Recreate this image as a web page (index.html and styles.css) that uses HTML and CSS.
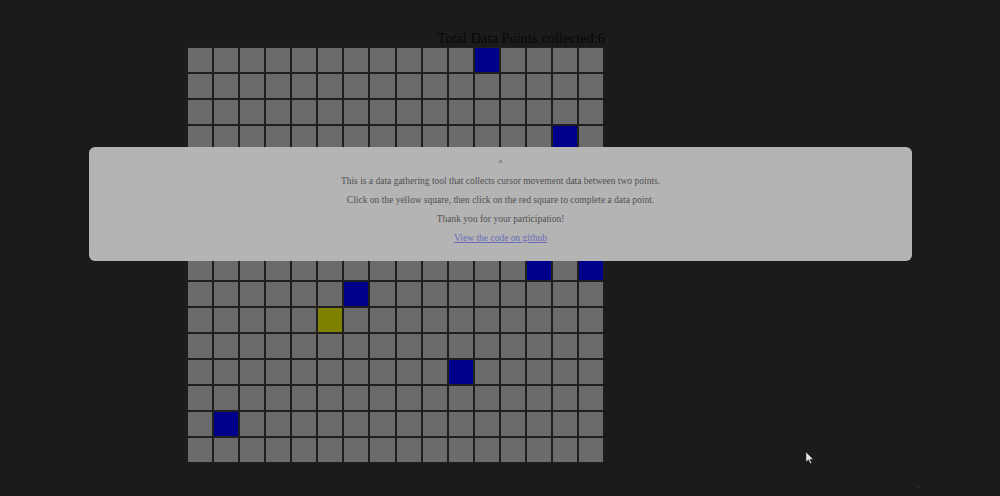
FILE: index.html
```html
<!DOCTYPE html>
<html>
<head>
<meta charset="utf-8">
<link rel="stylesheet" href="styles.css">
</head>
<body>
<div class="page">
  <div class="board">
    <div class="title">Total Data Points collected:6</div>
    <div class="grid" id="grid"></div>
  </div>
</div>
<div class="modal">
  <div class="close">×</div>
  <p>This is a data gathering tool that collects cursor movement data between two points.</p>
  <p>Click on the yellow square, then click on the red square to complete a data point.</p>
  <p>Thank you for your participation!</p>
  <p><a href="#">View the code on github</a></p>
</div>
<svg class="cursor" width="10" height="14" viewBox="0 0 10 14"><path d="M1 1 L1 11 L3.5 8.8 L5.2 12.6 L6.6 12 L5 8.3 L8.2 8.3 Z" fill="#e8e8e8" stroke="#333" stroke-width="0.6"/></svg>
<div class="dot"></div>
<script>
var blue = {"0,11":1,"3,14":1,"8,13":1,"8,15":1,"9,6":1,"12,10":1,"14,1":1};
var g = document.getElementById('grid');
for (var r = 0; r < 16; r++) {
  for (var c = 0; c < 16; c++) {
    var d = document.createElement('div');
    d.className = 'cell';
    if (blue[r + ',' + c]) d.className += ' blue';
    if (r === 10 && c === 5) d.className += ' yellow';
    g.appendChild(d);
  }
}
</script>
</body>
</html>
```
FILE: styles.css
```css
html, body {
  margin: 0;
  padding: 0;
  background: #1b1b1b;
  width: 1000px;
  height: 496px;
  overflow: hidden;
  font-family: "Liberation Serif", "Times New Roman", serif;
}
.page {
  padding-left: 187px;
  padding-top: 30px;
}
.board {
  width: 418px;
}
.title {
  text-align: right;
  font-size: 14.5px;
  line-height: 17px;
  color: #070707;
}
.grid {
  display: grid;
  grid-template-columns: repeat(16, 1fr);
  grid-auto-rows: 26px;
  width: 417px;
}
.cell {
  box-sizing: border-box;
  border: 1px solid #1f1f1f;
  background: #6b6b6b;
}
.cell.blue {
  background: #00008a;
}
.cell.yellow {
  background: #808000;
}
.modal {
  position: absolute;
  left: 89px;
  top: 147px;
  width: 823px;
  height: 114px;
  box-sizing: border-box;
  background: #b4b4b4;
  border-radius: 6px;
  padding-top: 9px;
  display: flex;
  flex-direction: column;
  align-items: center;
  gap: 7px;
  color: #505050;
  font-size: 9.5px;
  line-height: 12px;
}
.modal p {
  margin: 0;
}
.close {
  font-size: 8px;
  color: #444;
}
.modal a {
  color: #6a6ab8;
  text-decoration: underline;
}
.cursor {
  position: absolute;
  left: 805px;
  top: 451px;
}
.dot {
  position: absolute;
  left: 918px;
  top: 487px;
  width: 1px;
  height: 1px;
  background: #444;
}
```
